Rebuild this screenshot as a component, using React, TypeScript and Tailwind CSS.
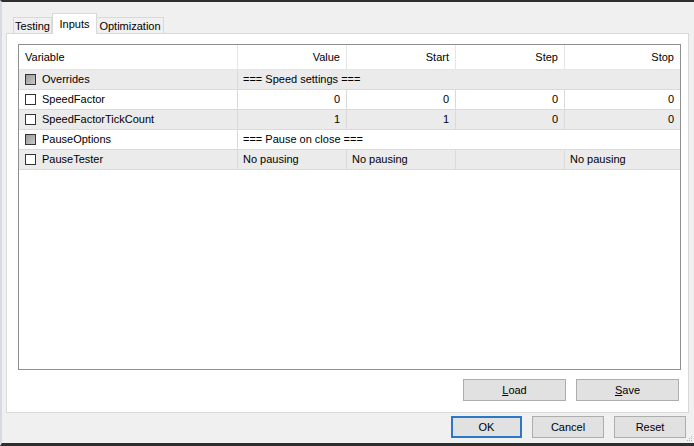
import React from 'react';

type Row = {
  name: string;
  group?: boolean;
  text?: string;
  values?: string[];
  pausing?: boolean;
};

const ROWS: Row[] = [
  { name: 'Overrides', group: true, text: '=== Speed settings ===' },
  { name: 'SpeedFactor', values: ['0', '0', '0', '0'] },
  { name: 'SpeedFactorTickCount', values: ['1', '1', '0', '0'] },
  { name: 'PauseOptions', group: true, text: '=== Pause on close ===' },
  { name: 'PauseTester', pausing: true },
];

function Checkbox({ grayed }: { grayed?: boolean }) {
  return (
    <div
      className={`w-[11px] h-[11px] shrink-0 border border-[#333333] ${
        grayed ? 'bg-gradient-to-br from-[#9a9a9a] to-[#c8c8c8]' : 'bg-white'
      }`}
    />
  );
}

function Button({ children, primary, w }: { children: React.ReactNode; primary?: boolean; w: string }) {
  return (
    <div
      className={`${w} h-[22px] flex items-center justify-center bg-[#e1e1e1] text-black ${
        primary ? 'border-2 border-[#2b78c4]' : 'border border-[#adadad]'
      }`}
    >
      {children}
    </div>
  );
}

export default function App() {
  return (
    <div className="relative w-[694px] h-[446px] bg-[#f0f0f0] border-t-2 border-t-[#2e2e2e] border-b-[3px] border-b-[#2e2e2e] border-l-2 border-l-[#d6dae4] flex flex-col pl-[4px] pr-[5px] text-[11px] text-black font-['Liberation_Sans',Arial,sans-serif] leading-none">
      {/* Tab strip */}
      <div className="mt-[11px] -mb-px h-[21px] flex items-end pl-[7px]">
        <div className="w-[39px] h-[17px] border border-b-0 border-[#d9d9d9] bg-[#f0f0f0] flex items-center justify-center">
          Testing
        </div>
        <div className="relative z-10 w-[45px] h-[21px] border border-b-0 border-[#d9d9d9] bg-white flex items-start pt-[5px] justify-center">
          Inputs
        </div>
        <div className="w-[67px] h-[17px] border border-b-0 border-l-0 border-[#d9d9d9] bg-[#f0f0f0] flex items-center justify-center">
          Optimization
        </div>
      </div>

      {/* Tab panel */}
      <div className="h-[380px] bg-white border border-[#d9d9d9] flex flex-col pt-[10px] pl-[11px] pr-[7px]">
        <div className="h-[326px] border border-[#8e8f8f] bg-white flex flex-col">
          {/* Header */}
          <div className="h-[25px] grid grid-cols-[219px_109px_109px_109px_1fr] border-b border-[#e5e5e5] items-center">
            <div className="h-full flex items-center pl-[6px] border-r border-[#e5e5e5]">Variable</div>
            {['Value', 'Start', 'Step', 'Stop'].map((h, i) => (
              <div
                key={h}
                className={`h-full flex items-center justify-end pr-[6px] ${i < 3 ? 'border-r border-[#e5e5e5]' : ''}`}
              >
                {h}
              </div>
            ))}
          </div>

          {/* Rows */}
          {ROWS.map((r, idx) => (
            <div
              key={r.name}
              className={`h-[20px] grid grid-cols-[219px_109px_109px_109px_1fr] border-b border-[#dadada] ${
                idx % 2 === 0 ? 'bg-[#ebebeb]' : 'bg-white'
              }`}
            >
              <div className="h-full flex items-center gap-[6px] pl-[6px] border-r border-[#dadada]">
                <Checkbox grayed={r.group} />
                <span>{r.name}</span>
              </div>
              {r.group && <div className="col-span-4 h-full flex items-center pl-[5px]">{r.text}</div>}
              {r.values &&
                r.values.map((v, i) => (
                  <div
                    key={i}
                    className={`h-full flex items-center justify-end pr-[6px] ${i < 3 ? 'border-r border-[#dadada]' : ''}`}
                  >
                    {v}
                  </div>
                ))}
              {r.pausing &&
                ['No pausing', 'No pausing', '', 'No pausing'].map((v, i) => (
                  <div
                    key={i}
                    className={`h-full flex items-center pl-[5px] ${i < 3 ? 'border-r border-[#dadada]' : ''}`}
                  >
                    {v}
                  </div>
                ))}
            </div>
          ))}
        </div>

        {/* Load / Save */}
        <div className="mt-[9px] flex justify-end gap-[10px] pr-[2px]">
          <Button w="w-[103px]">
            <span>
              <span className="underline">L</span>oad
            </span>
          </Button>
          <Button w="w-[103px]">
            <span>
              <span className="underline">S</span>ave
            </span>
          </Button>
        </div>
      </div>

      {/* Dialog buttons */}
      <div className="mt-[3px] flex justify-end gap-[10px] pr-[3px]">
        <Button primary w="w-[71px]">OK</Button>
        <Button w="w-[72px]">Cancel</Button>
        <Button w="w-[72px]">Reset</Button>
      </div>

      {/* Size grip */}
      <svg className="absolute right-[1px] bottom-[1px]" width="6" height="6" viewBox="0 0 6 6">
        <rect x="4" y="0" width="1" height="1" fill="#b8b8b8" />
        <rect x="2" y="2" width="1" height="1" fill="#b8b8b8" />
        <rect x="4" y="2" width="1" height="1" fill="#b8b8b8" />
        <rect x="0" y="4" width="1" height="1" fill="#b8b8b8" />
        <rect x="2" y="4" width="1" height="1" fill="#b8b8b8" />
        <rect x="4" y="4" width="1" height="1" fill="#b8b8b8" />
      </svg>
    </div>
  );
}
